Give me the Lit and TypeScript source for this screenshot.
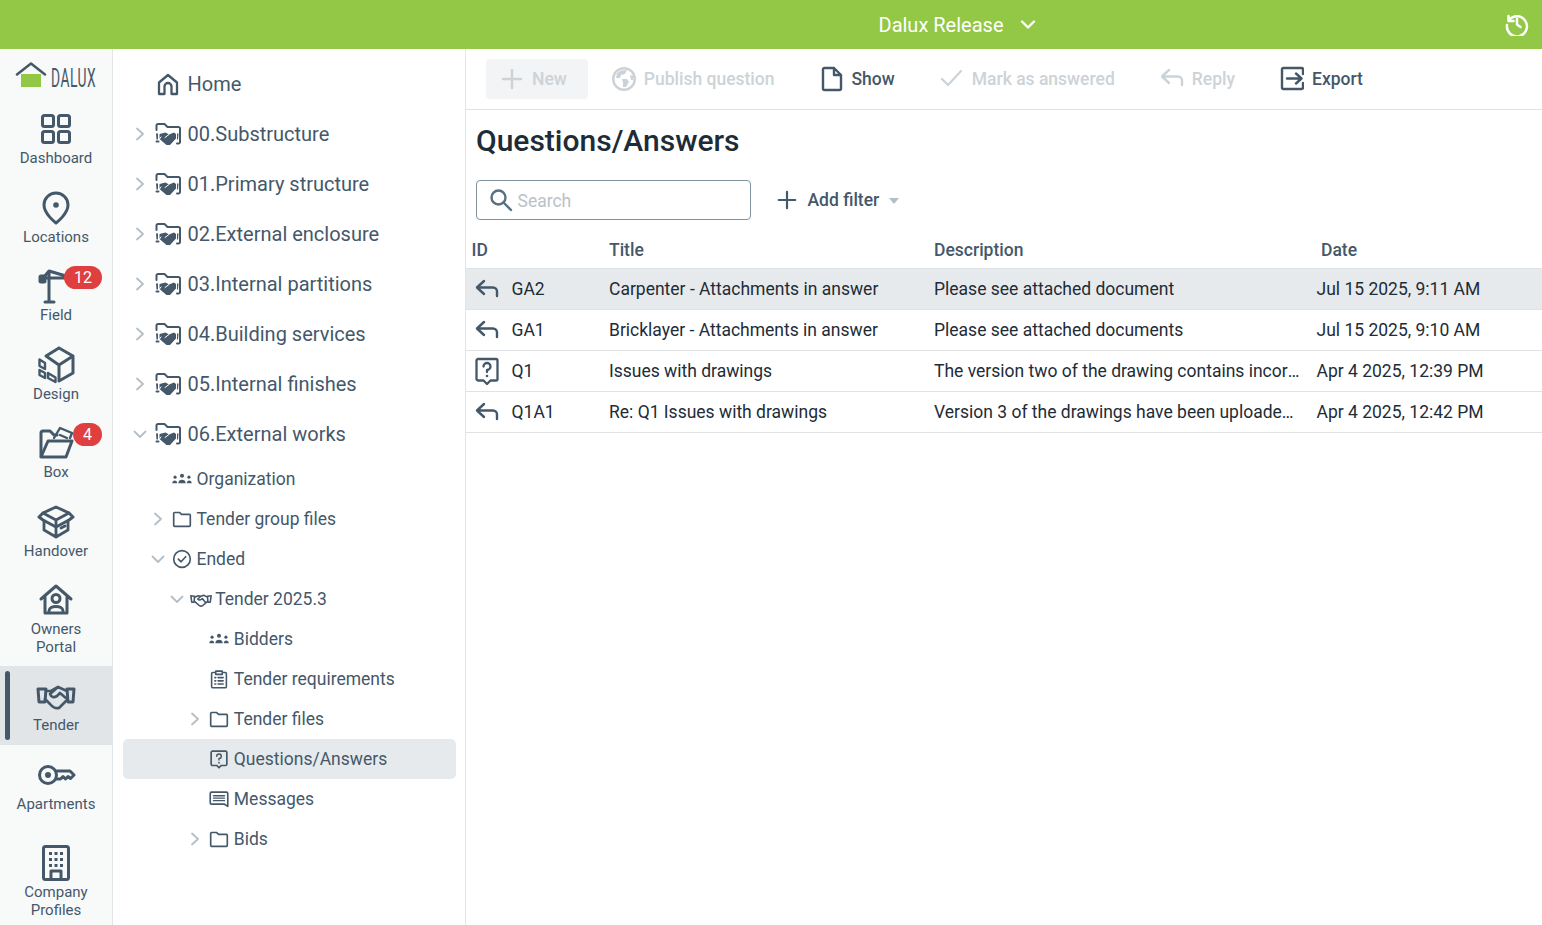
import { LitElement, html, svg, css } from 'lit';
import { customElement } from 'lit/decorators.js';

const railIcons: Record<string, unknown> = {
  dashboard: svg`<rect x="6.5" y="6.5" width="11" height="11" rx="2"/><rect x="22.5" y="6.5" width="11" height="11" rx="2"/><rect x="6.5" y="22.5" width="11" height="11" rx="2"/><rect x="22.5" y="22.5" width="11" height="11" rx="2"/>`,
  locations: svg`<path d="M20 35C20 35 8 26 8 17A12 12 0 0 1 32 17C32 26 20 35 20 35Z"/><circle cx="20" cy="17" r="2.8" fill="currentColor" stroke="none"/>`,
  field: svg`<path d="M13 5V36M9 36H18M5 12H30M8 11L13 5L30 10"/><rect x="4" y="10" width="5" height="6" rx="1" fill="currentColor"/>`,
  design: svg`<path d="M23 3L37 11V28L23 36V20L37 11M23 3L10 11L23 20"/><path d="M3.500 14.500L9 18V24L3.500 21ZM3.500 25L9 28V33L3.500 30ZM12 28L19.500 32.500V37L12 33Z" stroke-width="2.400"/>`,
  box: svg`<path d="M5 33V10A2 2 0 0 1 7 8H14L18 12H21"/><path d="M5 34H30L36 18H12Z"/><path d="M18 15L24 5L36 10L34 15M24 12L31 15" stroke-width="2.4"/>`,
  handover: svg`<path d="M20 5L33 11L37 15L33 18L20 25L7 18L3 15L7 11Z"/><path d="M7 11L20 18L33 11M20 18V35M8 19V28L20 35L32 28V19M25 26L29 24" stroke-width="2.8"/>`,
  owners: svg`<path d="M5 19L20 6L35 19M9 16V33H31V16"/><circle cx="20" cy="18.5" r="4"/><path d="M13 31C13 25 27 25 27 31"/>`,
  tender: svg`<path d="M2 13H10L9 26H3ZM38 13H31L32 26H37Z"/><path d="M10 15H15L22 11L31 15M9 23L14 28Q18 33 23 32L31 24M22 11L14 18Q16 23 21 20L24 17L31 23" stroke-width="2.700"/>`,
  apartments: svg`<circle cx="12" cy="20" r="8.500"/><circle cx="12" cy="20" r="3" fill="currentColor" stroke="none"/><path d="M20.500 16H34L38 20L34.500 23.500L32 21.500L29.500 24L27 21.500L24.500 24H20.500"/>`,
  company: svg`<rect x="7.500" y="3.500" width="25" height="33" rx="2"/><path d="M15 36V28H25V36"/><g fill="currentColor" stroke="none"><rect x="13" y="9" width="3" height="3"/><rect x="18.500" y="9" width="3" height="3"/><rect x="24" y="9" width="3" height="3"/><rect x="13" y="15" width="3" height="3"/><rect x="18.500" y="15" width="3" height="3"/><rect x="24" y="15" width="3" height="3"/><rect x="13" y="21" width="3" height="3"/><rect x="18.500" y="21" width="3" height="3"/><rect x="24" y="21" width="3" height="3"/></g>`,
};

const treeIcons: Record<string, unknown> = {
  home: svg`<path d="M4 23V11.500L13 4L22 11.500V23H16.500V15.500A3.500 3.500 0 0 0 9.500 15.500V23Z" stroke-width="2.300"/>`,
  workspace: svg`<path d="M1.500 9V4.500A1.500 1.500 0 0 1 3 3H9.500L12.500 6H23.500A1.500 1.500 0 0 1 25 7.500V21A1.500 1.500 0 0 1 23.500 22.500H22M1.500 20.500H3.500"/><path d="M1 12.500H3V18.500H1.500ZM23.500 12.500H22V18.500H23Z" fill="currentColor" stroke="none"/><path d="M4.500 13L10.500 11.500L14 13.500L19 11.500L21 13V17.500L15 24L11.500 24L4.500 18Z" fill="currentColor" stroke="none"/><path d="M14 13.500L10 16.500M4.500 18L6 16" stroke="#fff" stroke-width="1"/>`,
  group: svg`<g fill="currentColor" stroke="none"><circle cx="13" cy="9.500" r="2.200"/><path d="M9 17.500C9 12.500 17 12.500 17 17.500Z"/><circle cx="5.500" cy="11" r="1.700"/><path d="M2.500 17.500C2.500 13.500 7.800 13.500 7.800 17.500Z"/><circle cx="20.500" cy="11" r="1.700"/><path d="M18.200 17.500C18.200 13.500 23.500 13.500 23.500 17.500Z"/></g>`,
  folder: svg`<path d="M4 20V7A1 1 0 0 1 5 6H10.500L12.500 8H21A1 1 0 0 1 22 9V20A1 1 0 0 1 21 21H5A1 1 0 0 1 4 20Z" stroke-width="1.800"/>`,
  ended: svg`<circle cx="13" cy="13" r="9" stroke-width="1.800"/><path d="M9 13.200L12 16L17 10.500" stroke-width="1.800"/>`,
  deal: svg`<g stroke-width="1.700"><path d="M2 9.500L6 10L5.500 16.500L3 16.500ZM24 9.500L20 10L20.500 16.500L23 16.500Z"/><path d="M6 11L10 9.500L13 10L16 9L20 11M6 15.500L11 20Q13 21.500 15 20L20 15.500M13 10L9.500 13Q11.500 15.500 14.500 12.500L18 17"/></g>`,
  clipboard: svg`<path d="M9.500 6H7A1.500 1.500 0 0 0 5 7.500V21A1.500 1.500 0 0 0 6.500 22.500H19.500A1.500 1.500 0 0 0 21 21V7.500A1.500 1.500 0 0 0 19 6H16.500M9.500 4.500H16.500V8H9.500ZM8.500 11.500H9.500M12 11.500H17.500M8.500 15H9.500M12 15H17.500M8.500 18.500H9.500M12 18.500H17.500" stroke-width="1.700"/>`,
  question: svg`<path d="M6 4.500H20A1.500 1.500 0 0 1 21.500 6V18.500A1.500 1.500 0 0 1 20 20H15.500L13 22.500L10.500 20H6A1.500 1.500 0 0 1 4.500 18.500V6A1.500 1.500 0 0 1 6 4.500Z" stroke-width="1.800"/><path d="M10.500 10A2.500 2.500 0 1 1 13 12.500V14" stroke-width="1.600"/><circle cx="13" cy="17" r="1" fill="currentColor" stroke="none"/>`,
  message: svg`<path d="M5 5.500H21A1.500 1.500 0 0 1 22.500 7V21L18.500 18.500H5A1.500 1.500 0 0 1 3.500 17V7A1.500 1.500 0 0 1 5 5.500Z" stroke-width="1.800"/><path d="M7 9.500H19M7 12H19M7 14.800H19" stroke-width="1.500"/>`,
};

const toolIcons: Record<string, unknown> = {
  plus: svg`<path d="M12 3V21M3 12H21" stroke-width="2.400"/>`,
  globe: svg`<circle cx="12" cy="13" r="12" fill="currentColor" stroke="none"/><circle cx="12" cy="13" r="9.500" fill="#fff" stroke="none"/><path d="M5 7L9 4.500L15 4L13 8L9 9L8 12L4 12ZM10 13L15 13L17 16L14 21L11 21L11 17ZM18 9L21 10L21 14L19 14Z" fill="currentColor" stroke="none"/>`,
  doc: svg`<path d="M3 3.500A1.500 1.500 0 0 1 4.500 2H14L21 9V22.500A1.500 1.500 0 0 1 19.500 24H4.500A1.500 1.500 0 0 1 3 22.500ZM14 2V9H21" stroke-width="2.400"/>`,
  check: svg`<path d="M2 13L8 19L21 5" stroke-width="2.200"/>`,
  reply: svg`<path d="M9 4L2 10.500L9 17M2 10.500H18A4 4 0 0 1 22 14.500V19" stroke-width="2.400"/>`,
  export: svg`<path d="M23 8V3.500A1.500 1.500 0 0 0 21.500 2H3.500A1.500 1.500 0 0 0 2 3.500V21.500A1.500 1.500 0 0 0 3.500 23H21.500A1.500 1.500 0 0 0 23 21.500V17M7 12.500H21M16 7.500L21.500 12.500L16 17.500" stroke-width="2.400"/>`,
};

const rail = [
  { id: 'dashboard', lines: ['Dashboard'] },
  { id: 'locations', lines: ['Locations'] },
  { id: 'field', lines: ['Field'], badge: '12' },
  { id: 'design', lines: ['Design'] },
  { id: 'box', lines: ['Box'], badge: '4' },
  { id: 'handover', lines: ['Handover'] },
  { id: 'owners', lines: ['Owners', 'Portal'] },
  { id: 'tender', lines: ['Tender'], active: true },
  { id: 'apartments', lines: ['Apartments'] },
  { id: 'company', lines: ['Company', 'Profiles'] },
];

const top = [
  { label: 'Home', icon: 'home', chev: '' },
  { label: '00.Substructure', icon: 'workspace', chev: 'r' },
  { label: '01.Primary structure', icon: 'workspace', chev: 'r' },
  { label: '02.External enclosure', icon: 'workspace', chev: 'r' },
  { label: '03.Internal partitions', icon: 'workspace', chev: 'r' },
  { label: '04.Building services', icon: 'workspace', chev: 'r' },
  { label: '05.Internal finishes', icon: 'workspace', chev: 'r' },
  { label: '06.External works', icon: 'workspace', chev: 'd' },
];

const sub = [
  { label: 'Organization', icon: 'group', chev: '', level: 0 },
  { label: 'Tender group files', icon: 'folder', chev: 'r', level: 0 },
  { label: 'Ended', icon: 'ended', chev: 'd', level: 0 },
  { label: 'Tender 2025.3', icon: 'deal', chev: 'd', level: 1 },
  { label: 'Bidders', icon: 'group', chev: '', level: 2 },
  { label: 'Tender requirements', icon: 'clipboard', chev: '', level: 2 },
  { label: 'Tender files', icon: 'folder', chev: 'r', level: 2 },
  { label: 'Questions/Answers', icon: 'question', chev: '', level: 2, selected: true },
  { label: 'Messages', icon: 'message', chev: '', level: 2 },
  { label: 'Bids', icon: 'folder', chev: 'r', level: 2 },
];

const tools = [
  { label: 'Publish question', icon: 'globe', off: true },
  { label: 'Show', icon: 'doc', off: false },
  { label: 'Mark as answered', icon: 'check', off: true },
  { label: 'Reply', icon: 'reply', off: true },
  { label: 'Export', icon: 'export', off: false },
];

const rows = [
  { kind: 'reply', id: 'GA2', title: 'Carpenter - Attachments in answer', desc: 'Please see attached document', date: 'Jul 15 2025, 9:11 AM', selected: true },
  { kind: 'reply', id: 'GA1', title: 'Bricklayer - Attachments in answer', desc: 'Please see attached documents', date: 'Jul 15 2025, 9:10 AM' },
  { kind: 'question', id: 'Q1', title: 'Issues with drawings', desc: 'The version two of the drawing contains incorrect dimensions', date: 'Apr 4 2025, 12:39 PM' },
  { kind: 'reply', id: 'Q1A1', title: 'Re: Q1 Issues with drawings', desc: 'Version 3 of the drawings have been uploaded to the project', date: 'Apr 4 2025, 12:42 PM' },
];

@customElement('app-root')
export class AppRoot extends LitElement {
  static styles = css`
    :host {
      display: flex;
      flex-direction: column;
      height: 925px;
      overflow: hidden;
      font-family: Roboto, sans-serif;
      color: #44586a;
      background: #fff;
    }
    svg {
      fill: none;
      stroke: currentColor;
      stroke-linecap: round;
      stroke-linejoin: round;
      display: block;
      flex: none;
    }
    .topbar {
      height: 49px;
      flex: none;
      box-sizing: border-box;
      padding-left: 374px;
      background: #92c846;
      color: #fff;
      display: flex;
      align-items: center;
      justify-content: center;
      font-size: 20px;
      position: relative;
      gap: 16px;
    }
    .history {
      position: absolute;
      right: 13px;
      top: 12px;
    }
    .main {
      flex: 1;
      display: flex;
      min-height: 0;
    }
    .rail {
      width: 113px;
      flex: none;
      box-sizing: border-box;
      background: #f8f9f9;
      border-right: 1px solid #e1e6e9;
    }
    .logo {
      height: 50px;
      display: flex;
      align-items: center;
      padding-left: 15px;
      box-sizing: border-box;
      gap: 3px;
    }
    .logo svg {
      margin-top: 4px;
    }
    .logo span {
      font-size: 26px;
      font-weight: 400;
      color: #44586a;
      transform: scaleX(0.53);
      transform-origin: left center;
      letter-spacing: 1px;
      margin-top: 8px;
    }
    .item {
      position: relative;
      box-sizing: border-box;
      min-height: 78.5px;
      padding: 10px 0 10.5px;
      display: flex;
      flex-direction: column;
      align-items: center;
      text-align: center;
      font-size: 15px;
      line-height: 18px;
    }
    .item svg {
      stroke-width: 3;
    }
    .item.owners {
      padding-bottom: 10px;
    }
    .item.active {
      background: #e1e5e8;
      min-height: 79px;
    }
    .item.active::before {
      content: '';
      position: absolute;
      left: 5px;
      top: 5px;
      bottom: 5px;
      width: 5px;
      border-radius: 3px;
      background: #44586a;
    }
    .item.company {
      margin-top: 9.5px;
    }
    .badge {
      position: absolute;
      right: 10px;
      top: 10px;
      min-width: 29px;
      box-sizing: border-box;
      height: 23px;
      padding: 0 10px;
      border-radius: 12px;
      background: #e03f3f;
      color: #fff;
      font-size: 16px;
      line-height: 23px;
    }
    .tree {
      width: 353px;
      flex: none;
      box-sizing: border-box;
      border-right: 1px solid #e1e6e9;
      padding: 10px 9px 0 10px;
    }
    .node {
      height: 50px;
      display: flex;
      align-items: center;
      padding-left: 7px;
      font-size: 20px;
      box-sizing: border-box;
    }
    .node .chev {
      width: 20px;
      margin-right: 5px;
      display: flex;
      justify-content: center;
      color: #b4bec5;
      flex: none;
    }
    .node .label {
      margin-left: 6.5px;
    }
    .node.sub {
      height: 40px;
      font-size: 17.5px;
      border-radius: 5px;
    }
    .node.sub .chev {
      margin-right: 2px;
    }
    .node.sub .label {
      margin-left: 2.5px;
      margin-top: -1px;
    }
    .node.selected {
      background: #e7eaec;
    }
    .content {
      flex: 1;
      min-width: 0;
      display: flex;
      flex-direction: column;
    }
    .toolbar {
      height: 61px;
      box-sizing: border-box;
      flex: none;
      border-bottom: 1px solid #dfe3e6;
      display: flex;
      align-items: center;
      padding: 0 0 1px 20px;
      font-size: 17.5px;
      font-weight: 500;
    }
    .tool {
      display: flex;
      align-items: center;
      gap: 8px;
      margin-left: 45px;
    }
    .tool.off {
      color: #ccd3d8;
    }
    .tool.new {
      margin-left: 0;
      height: 40px;
      padding: 0 21px 0 14px;
      border-radius: 4px;
      background: #f2f4f5;
    }
    .tool.new + .tool {
      margin-left: 24px;
    }
    h1 {
      margin: 0;
      padding: 11px 0 0 10px;
      font-size: 30px;
      line-height: 40px;
      font-weight: 500;
      color: #1e2c37;
    }
    .filters {
      display: flex;
      align-items: center;
      padding: 19px 0 0 10px;
    }
    .search {
      width: 275px;
      height: 40px;
      box-sizing: border-box;
      border: 1px solid #7f929e;
      border-radius: 4px;
      display: flex;
      align-items: center;
      padding-left: 12px;
      gap: 4.5px;
      font-size: 17.5px;
      color: #b9c2c8;
    }
    .search span {
      padding-top: 2px;
    }
    .search svg {
      color: #5a6f7f;
    }
    .add {
      display: flex;
      align-items: center;
      margin-left: 25px;
      font-size: 17.5px;
      font-weight: 500;
      gap: 9.5px;
    }
    .caret {
      width: 0;
      height: 0;
      border: 5px solid transparent;
      border-top: 6px solid #b4bec5;
      border-bottom: 0;
      margin-top: 2px;
    }
    .grid {
      display: grid;
      grid-template-columns: 143px 325px 382.5px 1fr;
      align-items: center;
    }
    .head {
      height: 37px;
      margin-top: 12px;
      box-sizing: border-box;
      border-bottom: 1px solid #dfe3e6;
      font-size: 17.5px;
      font-weight: 500;
    }
    .head span:first-child {
      padding-left: 5.5px;
    }
    .head span:last-child {
      padding-left: 4.5px;
    }
    .row {
      height: 41px;
      box-sizing: border-box;
      border-bottom: 1px solid #dfe3e6;
      font-size: 17.5px;
      color: #1e2c37;
      padding-bottom: 1px;
    }
    .row.selected {
      background: #e7eaec;
    }
    .row .id {
      display: flex;
      align-items: center;
    }
    .row .id svg {
      margin-left: 9px;
      color: #44586a;
    }
    .row .id span {
      margin-left: 12.5px;
    }
    .row .desc {
      overflow: hidden;
      white-space: nowrap;
      text-overflow: ellipsis;
      padding-right: 15.5px;
    }
  `;

  render() {
    return html`
      <div class="topbar">
        <span>Dalux Release</span>
        <svg width="18" height="18" viewBox="0 0 18 18" stroke-width="2.400"><path d="M3 5.500L9 11.500L15 5.500"/></svg>
        <svg class="history" width="24" height="24" viewBox="0 0 24 24" stroke-width="2.500">
          <path d="M3.500 4V9H8.500M3.800 8.500A10 10 0 1 1 2 13M12 7V12.500L15.500 15"/>
        </svg>
      </div>
      <div class="main">
        <nav class="rail">
          <div class="logo">
            <svg width="33" height="28" viewBox="0 0 33 28" stroke-width="2.500">
              <rect x="6" y="12" width="20" height="13" fill="#92c846" stroke="none"/>
              <path d="M2 12.500L16 1.500L30 12.500" stroke="#44586a"/>
            </svg>
            <span>DALUX</span>
          </div>
          ${rail.map(
            (r) => html`
              <div class="item ${r.id} ${r.active ? 'active' : ''}">
                <svg width="40" height="40" viewBox="0 0 40 40">${railIcons[r.id]}</svg>
                ${r.lines.map((l) => html`<div>${l}</div>`)}
                ${r.badge ? html`<span class="badge">${r.badge}</span>` : ''}
              </div>
            `
          )}
        </nav>
        <aside class="tree">
          ${top.map(
            (n) => html`
              <div class="node">
                <span class="chev">${this.chevron(n.chev)}</span>
                <svg width="26" height="26" viewBox="0 0 26 26" stroke-width="2">${treeIcons[n.icon]}</svg>
                <span class="label">${n.label}</span>
              </div>
            `
          )}
          ${sub.map(
            (n) => html`
              <div
                class="node sub ${n.selected ? 'selected' : ''}"
                style="padding-left:${25 + n.level * 18.67}px"
              >
                <span class="chev">${this.chevron(n.chev)}</span>
                <svg width="24" height="24" viewBox="0 0 26 26" stroke-width="2">${treeIcons[n.icon]}</svg>
                <span class="label">${n.label}</span>
              </div>
            `
          )}
        </aside>
        <section class="content">
          <div class="toolbar">
            <div class="tool off new">
              <svg width="24" height="24" viewBox="0 0 24 24">${toolIcons.plus}</svg>
              <span>New</span>
            </div>
            ${tools.map(
              (t) => html`
                <div class="tool ${t.off ? 'off' : ''}">
                  <svg width="24" height="26" viewBox="0 0 24 26">${toolIcons[t.icon]}</svg>
                  <span>${t.label}</span>
                </div>
              `
            )}
          </div>
          <h1>Questions/Answers</h1>
          <div class="filters">
            <div class="search">
              <svg width="24" height="24" viewBox="0 0 24 24" stroke-width="2.400">
                <circle cx="9.500" cy="9.500" r="7"/><path d="M14.500 14.500L22 22"/>
              </svg>
              <span>Search</span>
            </div>
            <div class="add">
              <svg width="22" height="22" viewBox="0 0 24 24">${toolIcons.plus}</svg>
              <span>Add filter</span>
              <span class="caret"></span>
            </div>
          </div>
          <div class="grid head">
            <span>ID</span><span>Title</span><span>Description</span><span>Date</span>
          </div>
          ${rows.map(
            (r) => html`
              <div class="grid row ${r.selected ? 'selected' : ''}">
                <div class="id">
                  ${r.kind === 'reply'
                    ? html`<svg width="24" height="24" viewBox="0 0 24 24">${toolIcons.reply}</svg>`
                    : html`<svg width="24" height="28" viewBox="0 0 24 28" stroke-width="2.300">
                        <path d="M3 2H21A1.500 1.500 0 0 1 22.500 3.500V22A1.500 1.500 0 0 1 21 23.500H15.500L12 27L8.500 23.500H3A1.500 1.500 0 0 1 1.500 22V3.500A1.500 1.500 0 0 1 3 2Z"/>
                        <path d="M8.500 9.500A3.500 3.500 0 1 1 12 13V15"/>
                        <circle cx="12" cy="19" r="1.300" fill="currentColor" stroke="none"/>
                      </svg>`}
                  <span>${r.id}</span>
                </div>
                <div>${r.title}</div>
                <div class="desc">${r.desc}</div>
                <div>${r.date}</div>
              </div>
            `
          )}
        </section>
      </div>
    `;
  }

  chevron(kind: string) {
    if (kind === 'r') {
      return html`<svg width="14" height="14" viewBox="0 0 14 14" stroke-width="1.800"><path d="M4 1.500L10 7L4 12.500"/></svg>`;
    }
    if (kind === 'd') {
      return html`<svg width="14" height="14" viewBox="0 0 14 14" stroke-width="1.800"><path d="M1.500 4.500L7 10L12.500 4.500"/></svg>`;
    }
    return '';
  }
}
